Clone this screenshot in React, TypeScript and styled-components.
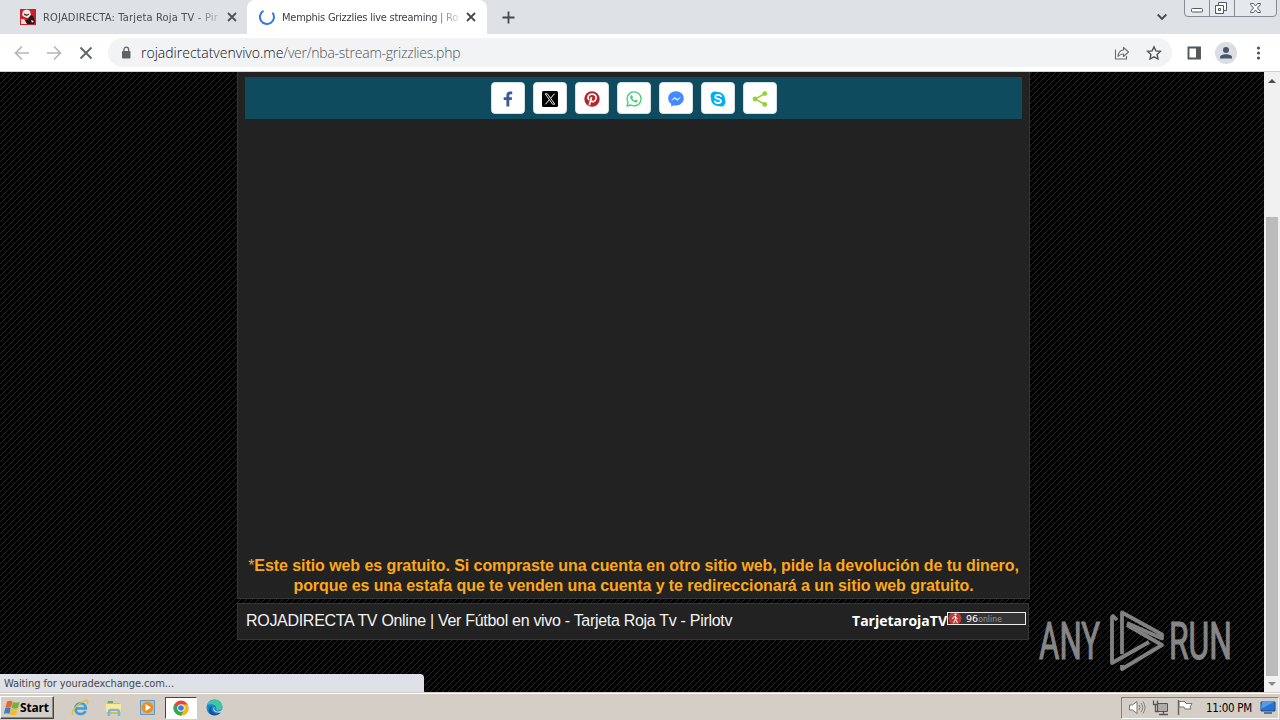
import React from "react";
import styled, { createGlobalStyle } from "styled-components";

const GlobalStyle = createGlobalStyle`
  * {
    box-sizing: border-box;
  }
  body {
    margin: 0;
    overflow: hidden;
    font-family: "DejaVu Sans Condensed", "DejaVu Sans", sans-serif;
  }
  svg {
    display: block;
    flex: none;
  }
`;

const Screen = styled.div`
  width: 1280px;
  height: 720px;
  display: flex;
  flex-direction: column;
  overflow: hidden;
`;

const Text = styled.span<{
  size: number;
  color: string;
  spacing?: number;
  font?: string;
  weight?: number;
}>`
  font-size: ${(props) => props.size}px;
  color: ${(props) => props.color};
  letter-spacing: ${(props) => props.spacing || 0}px;
  font-weight: ${(props) => props.weight || 400};
  ${(props) => props.font && `font-family: "${props.font}", sans-serif;`}
  white-space: pre;
`;

const TabStrip = styled.div`
  height: 34px;
  flex: none;
  display: flex;
  background-color: #dee1e6;
`;

const Tab = styled.div<{ active?: boolean }>`
  width: ${(props) => (props.active ? 240 : 247)}px;
  height: 34px;
  padding: 0 10px 0 ${(props) => (props.active ? 12 : 20)}px;
  display: flex;
  align-items: center;
  border-radius: 8px 8px 0 0;
  background-color: ${(props) => (props.active ? "#fff" : "transparent")};
`;

const TabTitle = styled.div`
  width: 176px;
  height: 17px;
  margin: 2px 0 0 7px;
  line-height: 16px;
  display: flex;
  mask-image: linear-gradient(to right, #000 85%, transparent 104%);
`;

const TabClose = styled.div`
  margin-left: 8px;
`;

const NewTab = styled.div`
  margin: 11px 0 0 15px;
`;

const WindowControls = styled.div`
  margin: 0 3px 0 auto;
  display: flex;
`;

const TabSearch = styled.div`
  margin: 13px 14px 0 0;
  padding-right: 3px;
`;

const Toolbar = styled.div`
  height: 38px;
  flex: none;
  display: flex;
  align-items: center;
  padding-left: 14px;
  background-color: #fff;
  border-bottom: 1px solid #cfd0d2;
`;

const NavButtons = styled.div`
  width: 94px;
  display: flex;
  gap: 16px;
`;

const AddressBar = styled.div`
  width: 1064px;
  height: 29px;
  display: flex;
  align-items: center;
  padding: 0 10px 0 12px;
  border-radius: 15px;
  background-color: #f1f3f4;
`;

const Url = styled.div`
  margin-left: 9px;
  flex: 1;
  line-height: 20px;
`;

const AddressActions = styled.div`
  display: flex;
  gap: 16px;
`;

const ToolbarActions = styled.div`
  margin-left: 14px;
  display: flex;
  align-items: center;
  gap: 13px;
`;

const Viewport = styled.div`
  position: relative;
  height: 620px;
  flex: none;
  display: flex;
`;

const Page = styled.div`
  position: relative;
  width: 1264px;
  padding-left: 237px;
  overflow: hidden;
`;

const Backdrop = styled.svg`
  position: absolute;
  inset: 0;
  z-index: -1;
`;

const Content = styled.div`
  width: 793px;
  height: 527px;
  padding: 5px 7px 0;
  display: flex;
  flex-direction: column;
  justify-content: space-between;
  background-color: #222;
  border: 1px solid #353535;
  border-top: 0;
`;

const ShareBar = styled.div`
  width: 777px;
  height: 42px;
  padding: 5px 0 0 246px;
  display: flex;
  gap: 8px;
  background-color: #0f4b5e;
`;

const ShareButton = styled.div`
  width: 34px;
  height: 32px;
  padding-top: 2px;
  display: flex;
  align-items: center;
  justify-content: center;
  background-color: #fff;
  border: 1px solid #d5dee1;
  border-radius: 4px;
`;

const Notice = styled.div`
  height: 42px;
  font: bold 16px/20px "Liberation Sans", sans-serif;
  letter-spacing: -0.07px;
  color: #fba919;
  text-align: center;
  white-space: nowrap;
`;

const Star = styled.span`
  font-weight: 400;
`;

const Footer = styled.div`
  width: 792px;
  height: 37px;
  margin-top: 4px;
  padding: 0 2px 2px 8px;
  display: flex;
  align-items: center;
  background-color: #222;
  border: 1px solid #353535;
`;

const Brand = styled.div`
  margin-left: auto;
  display: flex;
  align-items: center;
`;

const OnlineBadge = styled.div`
  width: 79px;
  height: 13px;
  margin-bottom: 4px;
  display: flex;
  align-items: center;
  background-color: #333;
  border: 1px solid #eee;
`;

const Watermark = styled.svg`
  position: absolute;
  left: 1036px;
  top: 536px;
`;

const StatusBubble = styled.div`
  position: absolute;
  left: 0;
  bottom: 0;
  width: 424px;
  height: 18px;
  padding-left: 4px;
  line-height: 16px;
  background-color: #dee1e8;
  border-radius: 0 4px 0 0;
`;

const Scrollbar = styled.div`
  width: 16px;
  display: flex;
  flex-direction: column;
  align-items: center;
  justify-content: space-between;
  background-color: #f1f1f1;
`;

const Thumb = styled.div`
  width: 12px;
  height: 459px;
  margin-top: 128px;
  background-color: #bcbcbc;
`;

const Taskbar = styled.div`
  height: 28px;
  flex: none;
  display: flex;
  align-items: center;
  padding: 2px 1px 0 0;
  background-color: #d5cec7;
  border-top: 1px solid #d5cec7;
  box-shadow: inset 0 1px #fff;
`;

const StartButton = styled.div`
  width: 54px;
  height: 23px;
  display: flex;
  align-items: center;
  padding-left: 3px;
  border: 1px solid;
  border-color: #fff #484644 #484644 #fff;
  box-shadow: inset -1px -1px #8b8782;
`;

const TaskItem = styled.div<{ active?: boolean }>`
  width: ${(props) => (props.active ? 32 : 34)}px;
  height: 22px;
  display: flex;
  align-items: center;
  justify-content: center;
  ${(props) =>
    props.active &&
    `background-color: #fff;
    border: 1px solid;
    border-color: #444 #fff #fff #444;`}
`;

const TaskItems = styled.div`
  margin-left: 9px;
  display: flex;
`;

const Tray = styled.div`
  width: 158px;
  height: 22px;
  margin-left: auto;
  padding: 0 2px 0 6px;
  display: flex;
  align-items: center;
  border: 1px solid;
  border-color: #85817c #fff #fff #85817c;
`;

const TrayIcons = styled.div`
  display: flex;
  gap: 6px;
`;

const Clock = styled.div`
  margin: 0 auto 0 12px;
  line-height: 18px;
`;

const Cross = ({ size, color, width }: { size: number; color: string; width: number }) => (
  <svg width={size} height={size} viewBox="0 0 10 10">
    <path d="M1 1L9 9M9 1L1 9" stroke={color} strokeWidth={width} />
  </svg>
);

const Favicon = () => (
  <svg width="16" height="16" viewBox="0 0 16 16">
    <path fill="#c9202b" d="M0 0h16v16H0z" />
    <path fill="#f2e6e2" d="M3 2q4-3 7 0l1 4-3 3-4-1-2-2z" />
    <path fill="#4a2f31" d="M4 4.500l3 1 2-1v1L7 7 4 6z" />
    <path fill="#201517" d="M9 9l2-3 2 1 2 5-1 3H7l-3-3 3-1z" />
    <path fill="#e9dedb" d="M1 10l3 0 3 5H1zM11 11l3 1-2 2z" />
  </svg>
);

const ShareIcons = [
  <svg key="facebook" width="16" height="16" viewBox="0 0 16 16">
    <path
      fill="#3b5998"
      d="M6.4 15.6V9.1H3.7V6.3h2.7V4.2C6.4 1.8 7.8.6 10 .6c1 0 1.9.1 2.2.1v2.6h-1.5c-1.2 0-1.4.6-1.4 1.4v1.6h2.8l-.4 2.8H9.3v6.5z"
    />
  </svg>,
  <svg key="x" width="16" height="16" viewBox="0 0 16 16">
    <rect width="16" height="16" rx="1.5" />
    <path d="M3.2 2.8h2.2l7.4 10.4h-2.2z" fill="none" stroke="#fff" strokeWidth="0.9" />
    <path d="M12.5 2.7L8.7 7.1M7.2 8.9l-3.8 4.4" stroke="#fff" />
  </svg>,
  <svg key="pinterest" width="16" height="16" viewBox="0 0 16 16">
    <circle cx="8" cy="8" r="7.7" fill="#b7242a" />
    <path
      d="M5.3 14.2L7.6 6M4.9 9C2.7 5.7 4.9 3.1 8.2 3.1c3 0 4.5 2 3.8 4.5-.7 3-3.5 4-4.7 2.2"
      fill="none"
      stroke="#fff"
      strokeWidth="1.7"
    />
  </svg>,
  <svg key="whatsapp" width="16" height="16" viewBox="0 0 16 16">
    <path
      d="M1 15l1-3.7A7 7 0 1 1 4.8 14z"
      fill="none"
      stroke="#48cd76"
      strokeWidth="1.3"
      strokeLinejoin="round"
    />
    <path
      d="M5.3 4.2l1 .2.7 1.8-.7 1c.7 1.2 1.5 1.8 2.6 2.3l1-1 1.8.9c0 1.5-1.2 2.1-2.2 2-2.8-.6-5.3-3.2-5.3-5.4 0-.9.4-1.4 1.1-1.8z"
      fill="#48cd76"
    />
  </svg>,
  <svg key="messenger" width="16" height="16" viewBox="0 0 16 16">
    <path
      fill="#448aff"
      d="M8 .2c4.4 0 7.8 3.1 7.8 7.1S12.4 14.5 8 14.5c-.8 0-1.5-.1-2.2-.3L3.2 15.7v-2.8C1.3 11.6.2 9.6.2 7.3.2 3.3 3.6.2 8 .2z"
    />
    <path d="M3.5 9.5l3-3.3 2.6 2.1 3.4-2.1-3.1 3.4-2.600-2z" fill="#fff" stroke="#fff" strokeWidth="0.3" />
  </svg>,
  <svg key="skype" width="16" height="16" viewBox="0 0 16 16">
    <circle cx="5" cy="5" r="4.5" fill="#00aff0" />
    <circle cx="11" cy="11" r="4.5" fill="#00aff0" />
    <circle cx="8" cy="8" r="7" fill="#00aff0" />
    <path
      d="M11 5.200C10.4 3.4 5.3 3.2 5.3 5.9c0 2.5 5.7 1.5 5.7 4.1 0 2.7-5.4 2.5-6.2.4"
      fill="none"
      stroke="#fff"
      strokeWidth="1.8"
      strokeLinecap="round"
    />
  </svg>,
  <svg key="share" width="16" height="16" viewBox="0 0 16 16">
    <path d="M13 2.500L3 8l10 5.500" fill="none" stroke="#95d03a" strokeWidth="1.5" />
    <circle cx="12.800" cy="2.600" r="2.400" fill="#95d03a" />
    <circle cx="3" cy="8" r="2.400" fill="#95d03a" />
    <circle cx="12.800" cy="13.400" r="2.400" fill="#95d03a" />
  </svg>,
];

const Stripes = () => (
  <Backdrop width="1264" height="620">
    <defs>
      <pattern id="stripes" width="6" height="6" patternUnits="userSpaceOnUse">
        <path fill="#000" d="M0 0h6v6H0z" />
        <path d="M-1 7L7-1M-1 1L1-1M5 7L7 5" stroke="#2a2a2a" strokeWidth="0.9" />
      </pattern>
    </defs>
    <rect width="1264" height="620" fill="url(#stripes)" />
  </Backdrop>
);

const AnyRun = () => (
  <Watermark width="206" height="80" viewBox="0 0 206 80">
    <g fill="#868686" stroke="#868686" strokeWidth="1.2" fontFamily="Roboto, sans-serif" fontSize="51">
      <text x="3" y="51" textLength="61" lengthAdjust="spacingAndGlyphs">
        ANY
      </text>
      <text x="133" y="51" textLength="63" lengthAdjust="spacingAndGlyphs">
        RUN
      </text>
    </g>
    <g fill="none" stroke="#818181" strokeWidth="3.8" strokeLinejoin="round">
      <path d="M86 46V4.500l40 22v4L91 15" />
      <path d="M91 17l35 20-40 24v-4M81 12l-4-4-1 1v46l37-21" />
    </g>
  </Watermark>
);

const Chrome = () => (
  <svg width="16" height="16" viewBox="0 0 16 16">
    <circle cx="8" cy="8" r="7.5" fill="#ea4335" />
    <path fill="#34a853" d="M1.500 4.300A7.500 7.500 0 0 0 8 15.500l3.200-5.600L8 8z" />
    <path fill="#fbbc04" d="M8 15.500A7.500 7.500 0 0 0 14.500 4.600H8l3.200 5.300z" />
    <circle cx="8" cy="8" r="3.7" fill="#fff" />
    <circle cx="8" cy="8" r="2.8" fill="#3978e8" />
  </svg>
);

const Explorer = () => (
  <svg width="18" height="18" viewBox="0 0 18 18">
    <path d="M14.500 12c-2 4.300-10 4.500-10-2.500 0-7 10-7 10.300 0H5" fill="none" stroke="#3a9ed9" strokeWidth="2.600" />
    <path d="M2 16C-1 13 7 4 14 1.500c4-1 3 2 2 3.500" fill="none" stroke="#e9bd32" strokeWidth="1.3" />
  </svg>
);

const Folder = () => (
  <svg width="18" height="18" viewBox="0 0 18 18">
    <path fill="#e0b94e" d="M2 3h5l1 1h7v11H2z" />
    <path fill="#fae99c" d="M1 5h15v8H1z" />
    <path fill="#65ad62" d="M3 2h5v2H3z" />
    <path fill="none" stroke="#79b9d8" strokeWidth="2.5" d="M4 17v-4q0-2 2-2h6q2 0 2 2v4" />
  </svg>
);

const MediaPlayer = () => (
  <svg width="18" height="18" viewBox="0 0 18 18">
    <path fill="#9fc6de" stroke="#6699bb" d="M1.500 1.500h14v14h-14z" />
    <circle cx="8.500" cy="8.500" r="5.800" fill="#f28b1d" />
    <path fill="#fff" d="M6.500 5l5.500 3.500L6.500 12z" />
  </svg>
);

const Edge = () => (
  <svg width="17" height="17" viewBox="0 0 17 17">
    <circle cx="8.500" cy="8.500" r="8" fill="#1686ce" />
    <path fill="#43c5a0" d="M1 6C4-1 15-1 16.400 7c.4 3-1.500 4.500-4 4.500-2 0-2.500-.8-2-2C11 6 5 4 1 6z" />
    <path fill="#164f98" d="M6 7c-2 3 0 7 4 7.500 2 .3 4-1 5-2-2 4-8 5-11 2C2 12 3 8 6 7z" />
    <path fill="#d6cfc9" d="M9 8c-2 2 0 4.500 3 4.500 2 0 3-1 4-2l.8 1.500-2 1.500c-5 1-9-2-7-5z" />
  </svg>
);

const WindowsFlag = () => (
  <svg width="16" height="16" viewBox="0 0 16 16">
    <path fill="#e7662b" d="M3 1.500q3-1.500 5.500 0L7 7.500q-2.500-1.500-5.500 0z" />
    <path fill="#73b13c" d="M9 2q3 1.500 6.500 0L14 8q-3 1.500-6.500 0z" />
    <path fill="#3c7fc7" d="M1.200 8q3-1.500 5.500 0L5.500 14Q3 12.500 0 14z" />
    <path fill="#f3bd2c" d="M7.200 8.500q3 1.500 6.500 0l-1.500 6q-3 1.500-6.500 0z" />
  </svg>
);

const Caption = () => (
  <svg width="93" height="18" viewBox="3 0 93 18">
    <path d="M3.500 0v13q0 3.500 3.500 3.500h85q3.500 0 3.500-3.500V0M28.500 0v16M53.500 0v16" fill="#e5e8ed" stroke="#868a92" />
    <g fill="#fff" stroke="#555a61">
      <rect x="10.500" y="8.500" width="11" height="3.500" rx="1" />
      <path d="M37.500 2.500h8v8h-8z" />
      <path d="M34.500 5.500h8v8h-8z" />
      <path d="M37.500 8.500h2v2h-2z" />
      <path d="M69.500 3.500h3l2 2.500 2-2.500h3v1l-3 3.500 3 3.500v1h-3l-2-2.500-2 2.500h-3v-1l3-3.500-3-3.500z" />
    </g>
  </svg>
);

function App() {
  return (
    <Screen>
      <GlobalStyle />
      <TabStrip>
        <Tab>
          <Favicon />
          <TabTitle>
            <Text size={11} color="#494c50" spacing={0.18}>
              ROJADIRECTA: Tarjeta Roja TV - Pir
            </Text>
          </TabTitle>
          <TabClose>
            <Cross size={10} color="#505358" width={1.8} />
          </TabClose>
        </Tab>
        <Tab active>
          <svg width="16" height="16" viewBox="0 0 16 16">
            <path d="M4.500 1.900A7 7 0 1 0 13.500 3.700" fill="none" stroke="#3475e0" strokeWidth="2" />
          </svg>
          <TabTitle>
            <Text size={11} color="#3c4043" spacing={-0.25}>
              Memphis Grizzlies live streaming | Ro
            </Text>
          </TabTitle>
          <TabClose>
            <Cross size={10} color="#45484c" width={1.8} />
          </TabClose>
        </Tab>
        <NewTab>
          <svg width="13" height="13" viewBox="0 0 13 13">
            <path d="M6.500 0.500v12M0.500 6.500h12" stroke="#45494e" strokeWidth="1.8" />
          </svg>
        </NewTab>
        <WindowControls>
          <TabSearch>
            <svg width="10" height="8" viewBox="0 0 10 8">
              <path d="M0.700 1.500L5 5.800 9.300 1.500" fill="none" stroke="#45494e" strokeWidth="1.9" />
            </svg>
          </TabSearch>
          <Caption />
        </WindowControls>
      </TabStrip>

      <Toolbar>
        <NavButtons>
          <svg width="16" height="16" viewBox="0 0 16 16">
            <path d="M15 8H2M8 1.500L1.500 8 8 14.500" fill="none" stroke="#b4b6b9" strokeWidth="1.7" />
          </svg>
          <svg width="16" height="16" viewBox="0 0 16 16">
            <path d="M1 8h13M8 1.500L14.500 8 8 14.500" fill="none" stroke="#b4b6b9" strokeWidth="1.7" />
          </svg>
          <svg width="16" height="16" viewBox="0 0 16 16">
            <path d="M2.500 2.500l11 11M13.500 2.500l-11 11" stroke="#5f6368" strokeWidth="1.8" />
          </svg>
        </NavButtons>
        <AddressBar>
          <svg width="12" height="14" viewBox="0 0 12 14">
            <rect x="2" y="5" width="8.500" height="7.500" rx="1" fill="#5f6368" />
            <path d="M4 5V3.500a2.300 2.300 0 0 1 4.600 0V5" fill="none" stroke="#5f6368" strokeWidth="1.3" />
          </svg>
          <Url>
            <Text size={14} color="#101114" font="Open Sans" weight={300}>
              rojadirectatvenvivo.me
            </Text>
            <Text size={14} color="#505459" font="Open Sans" weight={300} spacing={-0.24}>
              /ver/nba-stream-grizzlies.php
            </Text>
          </Url>
          <AddressActions>
            <svg width="16" height="16" viewBox="0 0 16 16">
              <path d="M1.500 4.500v9.500h11v-3" fill="none" stroke="#6a6e73" strokeWidth="1.1" />
              <path d="M9.500 5V2.500L14.500 7l-5 4.500V9C7 8.800 5.500 9.800 4 11.500 4.300 8 6 5.300 9.500 5z" fill="none" stroke="#6a6e73" strokeWidth="1.1" strokeLinejoin="round" />
            </svg>
            <svg width="16" height="16" viewBox="0 0 16 16">
              <path d="M8 1.800l1.900 4.100 4.500.5-3.300 3.100.9 4.500L8 11.800 4 14l.9-4.500L1.600 6.400l4.500-.5z" fill="none" stroke="#50545a" strokeWidth="1.4" />
            </svg>
          </AddressActions>
        </AddressBar>
        <ToolbarActions>
          <svg width="16" height="14" viewBox="0 0 16 14">
            <path d="M2.500 1.500h11.500v11H2.500z" fill="none" stroke="#54565a" strokeWidth="1.9" />
            <path d="M10 1h4v12h-4z" fill="#54565a" />
          </svg>
          <svg width="22" height="22" viewBox="0 0 22 22">
            <circle cx="11" cy="11" r="11" fill="#dadde1" />
            <circle cx="11" cy="8" r="3" fill="#47566f" />
            <path d="M5 16.500v-1.300c0-2 3-3 6-3s6 1 6 3v1.300z" fill="#47566f" />
          </svg>
          <svg width="18" height="16" viewBox="2 0 18 16">
            <circle cx="10.500" cy="3" r="1.6" fill="#505358" />
            <circle cx="10.500" cy="8" r="1.6" fill="#505358" />
            <circle cx="10.500" cy="13" r="1.6" fill="#505358" />
          </svg>
        </ToolbarActions>
      </Toolbar>

      <Viewport>
        <Page>
          <Stripes />
          <Content>
            <ShareBar>
              {ShareIcons.map((icon) => (
                <ShareButton key={icon.key}>{icon}</ShareButton>
              ))}
            </ShareBar>
            <Notice>
              <Star>*</Star>Este sitio web es gratuito. Si compraste una cuenta en otro sitio web, pide la devolución de tu dinero,
              <br />
              porque es una estafa que te venden una cuenta y te redireccionará a un sitio web gratuito.
            </Notice>
          </Content>
          <Footer>
            <Text size={16} color="#f4f4f4" font="Liberation Sans" spacing={-0.3}>
              ROJADIRECTA TV Online | Ver Fútbol en vivo - Tarjeta Roja Tv - Pirlotv
            </Text>
            <Brand>
              <Text size={14} color="#fff" font="Open Sans" weight={700}>
                TarjetarojaTV
              </Text>
              <OnlineBadge>
                <svg width="15" height="11" viewBox="0 0 15 11">
                  <circle cx="7" cy="5.500" r="6.500" fill="#c33a38" />
                  <path d="M7.500 3v3l2 4M7.500 6l-2 4M4.500 6l1-2 2-.5 2 2.500" fill="none" stroke="#fff" />
                  <circle cx="7.500" cy="1.500" r="1.1" fill="#fff" />
                </svg>
                <Text size={9.5} color="#fff" font="DejaVu Sans">
                  {" "}96
                </Text>
                <Text size={8.5} color="#999" spacing={0.1}>
                  online
                </Text>
              </OnlineBadge>
            </Brand>
          </Footer>
          <AnyRun />
        </Page>
        <Scrollbar>
          <svg width="16" height="17" viewBox="0 0 16 17">
            <path d="M4 11l4-4 4 4z" fill="#505050" />
          </svg>
          <Thumb />
          <svg width="16" height="16" viewBox="0 0 16 16">
            <path d="M4 6l4 4 4-4z" fill="#8b8b8b" />
          </svg>
        </Scrollbar>
        <StatusBubble>
          <Text size={11} color="#46494e" spacing={-0.1}>
            Waiting for youradexchange.com...
          </Text>
        </StatusBubble>
      </Viewport>

      <Taskbar>
        <StartButton>
          <WindowsFlag />
          <Text size={12} color="#000" font="Open Sans" weight={700} spacing={-0.2}>
            Start
          </Text>
        </StartButton>
        <TaskItems>
          <TaskItem>
            <Explorer />
          </TaskItem>
          <TaskItem>
            <Folder />
          </TaskItem>
          <TaskItem>
            <MediaPlayer />
          </TaskItem>
          <TaskItem active>
            <Chrome />
          </TaskItem>
          <TaskItem>
            <Edge />
          </TaskItem>
        </TaskItems>
        <Tray>
          <TrayIcons>
            <svg width="18" height="17" viewBox="0 0 18 17">
              <path d="M1.500 6h3L9 2.500v12L4.500 11h-3z" fill="#fff" stroke="#777" />
              <path d="M11 6q2 2.500 0 5M13 4q3.500 4.500 0 9M15 2.500q4 6 0 12" fill="none" stroke="#777" strokeWidth="0.9" />
            </svg>
            <svg width="18" height="17" viewBox="0 0 18 17">
              <path d="M5.500 4.500h10v8h-10z" fill="#ababab" stroke="#555" />
              <path d="M7 15.500h9M11.500 12.500v3M1.500 1.500v4h4v-4M3.500 5.500v7h3" fill="none" stroke="#555" strokeWidth="1.3" />
            </svg>
            <svg width="18" height="17" viewBox="0 0 18 17">
              <path d="M3 2.500h6l1 2h6l-2 3.500 1 2H9L8 8H3z" fill="#fff" stroke="#777" />
              <path d="M2.500 1v15" stroke="#666" strokeWidth="1.5" />
            </svg>
          </TrayIcons>
          <Clock>
            <Text size={11.5} color="#000" spacing={-0.3}>
              11:00 PM
            </Text>
          </Clock>
          <svg width="16" height="15" viewBox="0 0 16 15">
            <path d="M1 2h14v9H1z" fill="#2474d1" stroke="#174d91" />
            <path d="M1 9L14 2H2z" fill="#559bea" />
            <path d="M4 13h8" stroke="#456" strokeWidth="1.5" />
          </svg>
        </Tray>
      </Taskbar>
    </Screen>
  );
}

export default App;
